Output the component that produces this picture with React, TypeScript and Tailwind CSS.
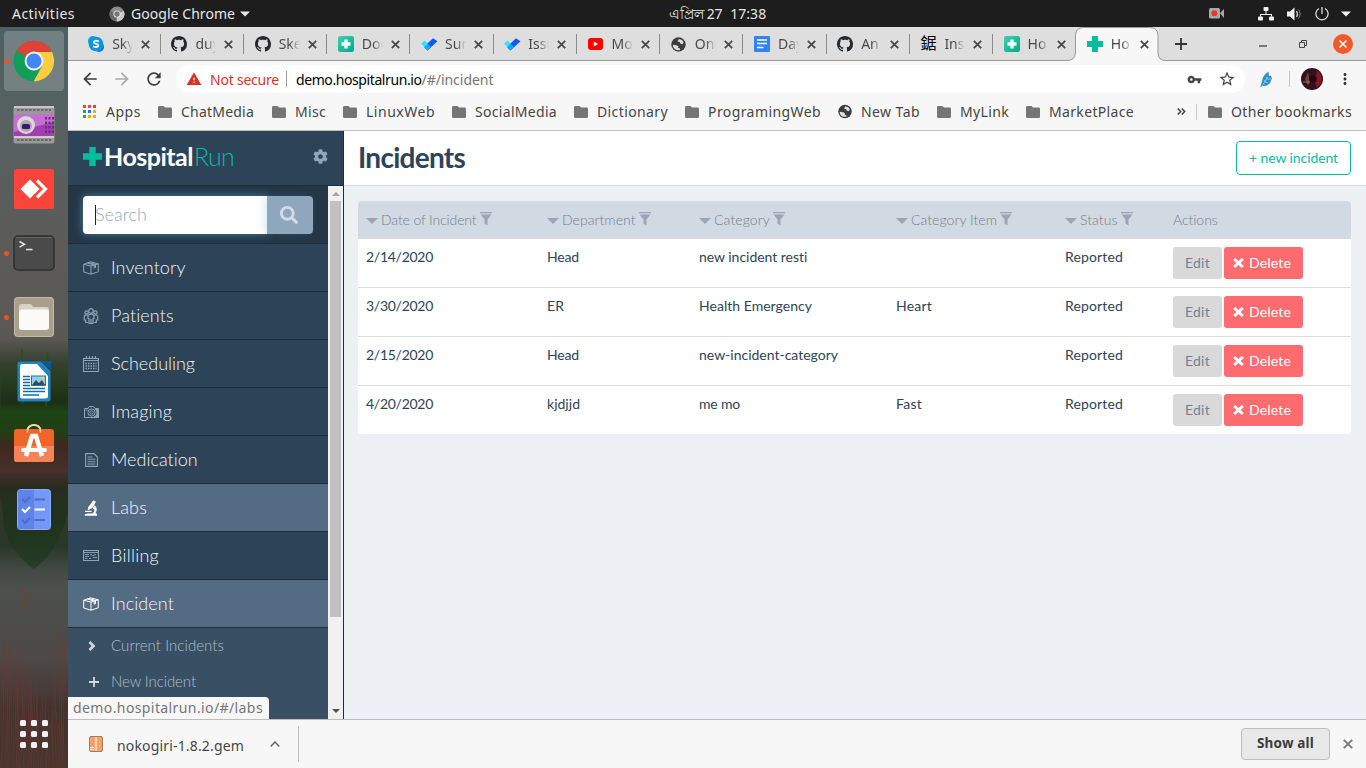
import { useLayoutEffect, useRef } from "react";
import type { ReactNode } from "react";
import { MdArrowBack, MdArrowForward, MdRefresh, MdVpnKey, MdStarBorder, MdMoreVert, MdWarning } from "react-icons/md";
import { FaSearch, FaCog } from "react-icons/fa";

/** Text tracked so that it fills exactly the given width. */
function Fit({ w, className = "", children }: { w: number; className?: string; children: ReactNode }) {
  const ref = useRef<HTMLSpanElement>(null);
  useLayoutEffect(() => {
    const el = ref.current;
    if (!el) return;
    el.style.letterSpacing = "0px";
    const natural = el.getBoundingClientRect().width;
    const n = (el.textContent || "").length;
    el.style.letterSpacing = `${(w - natural) / n}px`;
  }, [w]);
  return (
    <span ref={ref} className={`inline-block shrink-0 whitespace-pre ${className}`}>
      {children}
    </span>
  );
}

/* ---------- desktop ---------- */

function TopBar() {
  return (
    <div className="flex h-[27px] shrink-0 items-center bg-[#1d1d1d] text-[14px] text-[#e6e6e6]">
      <div className="flex w-[669px] items-center pl-3">
        <Fit w={63}>Activities</Fit>
        <svg className="ml-[34px]" width="16" height="16" viewBox="0 0 16 16">
          <circle cx="8" cy="8" r="7.5" fill="#8b8b8b" />
          <path d="M8 8 14.9 5A7.5 7.5 0 0 1 8 15.500z" fill="#c9c9c9" />
          <path d="M1.300 4.500A7.500 7.500 0 0 0 7 15.400L8 8z" fill="#6a6a6a" />
          <circle cx="8" cy="8" r="3.600" fill="#e8e8e8" />
          <circle cx="8" cy="8" r="2.700" fill="#777" />
        </svg>
        <Fit w={104} className="ml-[6px]">Google Chrome</Fit>
        <svg className="ml-[5px]" width="10" height="6" viewBox="0 0 10 6"><path d="M0 .5h10L5 5.500z" fill="#e6e6e6" /></svg>
      </div>
      <div className="flex items-center gap-2">
        <Fit w={52.500}>এপ্রিল 27</Fit>
        <Fit w={36}>17:38</Fit>
      </div>
      <div className="flex flex-1 items-center justify-end pr-[15px]">
        <svg width="16" height="11" viewBox="0 0 16 11">
          <rect x="0" y="0" width="11" height="10.500" rx="1.500" fill="#a9a9a9" />
          <path d="M11 5.200 15 1v9z" fill="#a9a9a9" />
          <circle cx="5.400" cy="5.200" r="3" fill="#e23b2e" />
        </svg>
        <svg className="ml-[33px]" width="16" height="14" viewBox="0 0 16 14" fill="#f0f0f0">
          <rect x="5.500" y="0" width="5" height="4" rx="1" />
          <rect x="0" y="9.500" width="5" height="4" rx="1" />
          <rect x="11" y="9.500" width="5" height="4" rx="1" />
          <path d="M7.500 4h1v3h5.500v2.500h-1V8H3v1.500H2V7h5.500z" />
        </svg>
        <svg className="ml-[13px]" width="16" height="14" viewBox="0 0 16 14" fill="#f0f0f0">
          <path d="M0 4.500h3L7.500.500v13L3 9.500H0z" />
          <path d="M9.500 4q2 3 0 6" fill="none" stroke="#ddd" strokeWidth="1.200" />
          <path d="M11.500 2.500q3.400 4.500 0 9" fill="none" stroke="#888" strokeWidth="1" />
        </svg>
        <svg className="ml-[12px]" width="14" height="14" viewBox="0 0 14 14" fill="none" stroke="#e6e6e6" strokeWidth="1.200">
          <path d="M7 0v7M4 1.400a6.100 6.100 0 1 0 6 0" />
        </svg>
        <svg className="ml-[12px]" width="10" height="6" viewBox="0 0 10 6"><path d="M0 .5h10L5 5.500z" fill="#f0f0f0" /></svg>
      </div>
    </div>
  );
}

function Wallpaper() {
  const reeds = Array.from({ length: 54 }, (_, i) => {
    const x = (i * 29) % 69;
    const top = 590 + ((i * 47) % 110);
    return `M${x} 741Q${x + ((i * 7) % 9) - 4} ${(top + 741) / 2} ${x + ((i * 11) % 7) - 3} ${top}`;
  }).join("");
  const needles = Array.from({ length: 90 }, (_, i) => {
    const x = (i * 23) % 69;
    const y = 318 + ((i * 13) % 36) + Math.abs(x - 32) * 0.35;
    return `M${x} ${y + 22}L${x + (x - 32) * 0.12} ${y}`;
  }).join("");
  return (
    <svg className="absolute inset-0" width="68" height="741" viewBox="0 0 68 741" preserveAspectRatio="none">
      <defs>
        <linearGradient id="wall" x1="0" y1="0" x2="0" y2="1">
          <stop offset="0" stopColor="#4d6164" />
          <stop offset=".12" stopColor="#566160" />
          <stop offset=".3" stopColor="#5c5b59" />
          <stop offset=".42" stopColor="#5b5854" />
          <stop offset=".455" stopColor="#34402e" />
          <stop offset=".48" stopColor="#273b20" />
          <stop offset=".505" stopColor="#1d2f17" />
          <stop offset=".52" stopColor="#1d4413" />
          <stop offset=".545" stopColor="#203f15" />
          <stop offset=".565" stopColor="#40281e" />
          <stop offset=".6" stopColor="#46302a" />
          <stop offset=".622" stopColor="#282a1f" />
          <stop offset=".65" stopColor="#333629" />
          <stop offset=".7" stopColor="#293726" />
          <stop offset=".735" stopColor="#444b45" />
          <stop offset=".76" stopColor="#4d4f4d" />
          <stop offset=".85" stopColor="#4d4a48" />
          <stop offset=".92" stopColor="#44322f" />
          <stop offset="1" stopColor="#41372d" />
        </linearGradient>
        <linearGradient id="reflection" x1="0" y1="0" x2="0" y2="1">
          <stop offset="0" stopColor="#1c3018" stopOpacity="0" />
          <stop offset=".3" stopColor="#1b301a" />
          <stop offset="1" stopColor="#1f3a22" stopOpacity=".9" />
        </linearGradient>
      </defs>
      <rect width="68" height="741" fill="url(#wall)" />
      <path d={needles} stroke="#2c4a22" strokeWidth="1" opacity=".8" />
      <path d="M0 455h68v30Q58 525 34 542Q10 525 4 500z" fill="url(#reflection)" opacity=".8" />
      <path d={reeds} stroke="#6b3a34" strokeWidth=".8" fill="none" opacity=".55" />
      <path d="M20 562l8 5 4 8M25 570l-1 14" stroke="#6e4137" strokeWidth="2" fill="none" opacity=".7" />
    </svg>
  );
}

function Dot({ on }: { on?: boolean }) {
  return <span className={`ml-1 size-[5px] rounded-full ${on ? "bg-[#e95420]" : "bg-transparent"}`} />;
}

function DockRow({ on, active, children }: { on?: boolean; active?: boolean; children: ReactNode }) {
  return (
    <div className={`flex h-[60px] w-[60px] items-center rounded ${active ? "bg-white/20" : ""}`}>
      <span className="-ml-[4px] flex w-[10px]"><Dot on={on} /></span>
      <span className="flex w-[48px] justify-center">{children}</span>
    </div>
  );
}

function Dock() {
  return (
    <div className="relative w-[68px] shrink-0 overflow-hidden">
      <Wallpaper />
      <div className="relative flex h-full flex-col items-center gap-1 pt-1">
        <DockRow on active>
          <svg width="42" height="42" viewBox="0 0 42 42">
            <circle cx="21" cy="21" r="20.300" fill="#129d58" />
            <path d="M21 21 3.400 10.800A20.300 20.300 0 0 1 39 12H21z" fill="#db4437" />
            <path d="M21 12h18A20.300 20.300 0 0 1 20.500 41.300L29 26z" fill="#ffcd40" />
            <path d="M3.400 10.800 12.800 26 21 30l8-4-8.500 15.300A20.300 20.300 0 0 1 3.400 10.800z" fill="#129d58" />
            <circle cx="21" cy="21" r="9.400" fill="#f1f1f1" />
            <circle cx="21" cy="21" r="7.500" fill="#4285f4" />
          </svg>
        </DockRow>
        <DockRow>
          <svg width="42" height="38" viewBox="0 0 42 38">
            <rect x=".5" y=".5" width="41" height="37" rx="2" fill="#9a9a9a" />
            <rect x="1" y="8" width="40" height="22" fill="#a13fae" />
            <path d="M1 8h40v8L1 26z" fill="#c56fd0" />
            <path d="M4 4h34M4 34h34" stroke="#666" strokeWidth="2" strokeDasharray="2.500 1.500" />
            <path d="M1 1h40M1 31h40" stroke="#ddd" strokeWidth="1.500" />
            <path d="M33 11v18M36.500 11v18M40 11v18" stroke="#6e2a80" strokeWidth="2" strokeDasharray="2.500 2" />
            <circle cx="13" cy="19" r="9" fill="#d8d8d8" />
            <circle cx="13" cy="20" r="6" fill="#aaa" />
            <rect x="9" y="18" width="8" height="5" rx="1.500" fill="#3f1478" />
          </svg>
        </DockRow>
        <DockRow>
          <svg width="40" height="40" viewBox="0 0 40 40">
            <rect width="40" height="40" rx="2.500" fill="#fb443a" />
            <path d="M16 10.500 25.500 20 16 29.500 6.500 20z" fill="#fff" />
            <path d="m23 11.500 8.500 8.500-8.500 8.500" fill="none" stroke="#fff" strokeWidth="3.200" />
          </svg>
        </DockRow>
        <DockRow on>
          <svg width="42" height="36" viewBox="0 0 42 36">
            <rect x="1" y="1" width="40" height="34" rx="4" fill="#4a4a4a" stroke="#2e2e2e" strokeWidth="1.500" />
            <path d="M3 2.500h36" stroke="#666" />
            <path d="m6.500 6.500 5 2.800-5 2.800M13 14.500h6.500" fill="none" stroke="#e4e4e4" strokeWidth="1.500" />
          </svg>
        </DockRow>
        <DockRow on>
          <svg width="40" height="40" viewBox="0 0 40 40">
            <rect width="40" height="40" rx="4" fill="#a9a08c" />
            <rect x=".5" y=".5" width="39" height="39" rx="3.500" fill="none" stroke="#c3baa6" />
            <path d="M5 10q0-3 3-3h8q2 0 3 3h14q2 0 2 3v8H5z" fill="#d9d3c5" />
            <rect x="5" y="12.500" width="30" height="20.500" rx="3" fill="#fbfaf8" />
          </svg>
        </DockRow>
        <DockRow>
          <svg width="34" height="41" viewBox="0 0 34 41">
            <path d="M3 .500h21L33.500 10v28a2.500 2.500 0 0 1-2.500 2.500H3A2.500 2.500 0 0 1 .500 38V3A2.500 2.500 0 0 1 3 .500z" fill="#2083c0" />
            <path d="M5.500 3H20l11 12v20q0 2.500-2.500 2.500h-23Q3 37.500 3 35V5.500Q3 3 5.500 3z" fill="#fff" />
            <path d="M24 0h10v9z" fill="#0d5a8c" />
            <path d="M6 15.500h7M6 18.500h7M6 21.500h7M6 24.500h7M6 27.500h22M6 30.500h22M6 34h16" stroke="#0e6ea8" strokeWidth="1.500" />
            <rect x="14.500" y="15" width="14" height="9.500" fill="#8fd0f0" stroke="#1378b4" />
            <path d="m15 24 4-5 3 3 3-3 3 5z" fill="#3d4a4e" />
            <circle cx="26" cy="17" r="1.500" fill="#f7c948" />
          </svg>
        </DockRow>
        <DockRow>
          <svg className="mb-[5px]" width="40" height="38" viewBox="0 0 40 38">
            <path d="M13.500 8V6.500a6.500 5.500 0 0 1 13 0V8" fill="none" stroke="#ecd6ae" strokeWidth="2" />
            <rect y="5" width="40" height="33" rx="3" fill="#ef652a" />
            <path d="M0 22h40v13a3 3 0 0 1-3 3H3a3 3 0 0 1-3-3z" fill="#f5835a" />
            <path d="M13.500 8.500V6.500a6.500 5.500 0 0 1 13 0v2" fill="none" stroke="#ecd6ae" strokeWidth="1.500" />
            <path d="m12 32 6-20h4l6 20" fill="none" stroke="#fff" strokeWidth="4.500" />
            <path d="M9 26h22" stroke="#fff" strokeWidth="4" strokeLinecap="round" />
          </svg>
        </DockRow>
        <DockRow>
          <svg width="34" height="41" viewBox="0 0 34 41">
            <rect x=".500" y=".500" width="33" height="40" rx="3" fill="#7398f8" stroke="#8fabfa" />
            <path d="M3 1h14v39H3A2 2 0 0 1 1 38V3A2 2 0 0 1 3 1z" fill="#5f83ea" />
            <path d="m5 10 3 3 5-5M5 31l3 3 5-5M17.500 10.500H28M17.500 31H28" fill="none" stroke="#4e6cc4" strokeWidth="1.800" />
            <path d="m5 20 3 3 5-5M17.500 20.500H28" fill="none" stroke="#fff" strokeWidth="2.200" />
          </svg>
        </DockRow>
        <div className="mt-auto mb-[20px] grid grid-cols-3 gap-[5px]">
          {Array.from({ length: 9 }, (_, i) => (
            <span key={i} className="size-[6px] rounded-[1.500px] bg-[#f2f2f2]" />
          ))}
        </div>
      </div>
    </div>
  );
}

/* ---------- browser chrome ---------- */

function CloseX() {
  return (
    <svg width="9" height="9" viewBox="0 0 9 9" fill="none" stroke="#454545" strokeWidth="1.700"><path d="m.8.800 7.400 7.400M8.200.800.800 8.200" /></svg>
  );
}

function GithubIcon() {
  return (
    <svg width="16" height="16" viewBox="0 0 16 16" fill="#24292e">
      <path d="M8 0C3.580 0 0 3.580 0 8c0 3.540 2.290 6.530 5.470 7.590.4.070.55-.17.55-.38 0-.19-.01-.82-.01-1.490-2.010.37-2.530-.49-2.690-.94-.09-.23-.48-.94-.82-1.130-.28-.15-.68-.52-.01-.53.63-.01 1.080.58 1.230.82.72 1.210 1.870.87 2.330.66.07-.52.28-.87.51-1.070-1.780-.2-3.640-.89-3.640-3.950 0-.87.31-1.590.82-2.150-.08-.2-.36-1.020.08-2.120 0 0 .67-.21 2.200.82.64-.18 1.320-.27 2-.27.68 0 1.360.09 2 .27 1.530-1.040 2.200-.82 2.200-.82.44 1.100.16 1.920.08 2.120.51.56.82 1.270.82 2.150 0 3.070-1.870 3.750-3.650 3.950.29.25.54.73.54 1.480 0 1.070-.01 1.930-.01 2.200 0 .21.15.46.55.38A8.013 8.013 0 0 0 16 8c0-4.420-3.580-8-8-8z" />
    </svg>
  );
}

function SkypeIcon() {
  return (
    <svg width="16" height="16" viewBox="0 0 16 16">
      <circle cx="5" cy="5" r="5" fill="#00a2e8" /><circle cx="11" cy="11" r="5" fill="#0078d4" /><circle cx="8" cy="8" r="7.300" fill="#0c95e0" />
      <path d="M10.300 5.300Q8 4 6.300 5.200 5 6.800 7.500 7.700L9 8.100q2 1 .8 2.400-1.800 1.200-4.100-.1" fill="none" stroke="#fff" strokeWidth="1.700" strokeLinecap="round" />
    </svg>
  );
}

function GreenPlusIcon() {
  return (
    <svg width="16" height="16" viewBox="0 0 16 16">
      <defs><linearGradient id="gp" x1="0" y1="0" x2="1" y2="1"><stop offset="0" stopColor="#3fd0ae" /><stop offset="1" stopColor="#04a88b" /></linearGradient></defs>
      <rect width="16" height="16" rx="2" fill="url(#gp)" /><path d="M6.300 3.500h3.400v2.800h2.800v3.400H9.700v2.800H6.300V9.700H3.500V6.300h2.800z" fill="#e9fff9" />
    </svg>
  );
}

function BigPlusIcon() {
  return <svg width="16" height="16" viewBox="0 0 16 16"><path d="M5 0h6v5h5v6h-5v5H5v-5H0V5h5z" fill="#03bd9e" /></svg>;
}

function TodoIcon() {
  return (
    <svg width="17" height="13" viewBox="0 0 17 13" className="shrink-0"><path d="M6.500 12.500 2.800 8.800 12 .300l4.500 3z" fill="#0f5cf5" /><path d="m.2 5.800 3.300-3.300L7 6 3.500 9.300z" fill="#35e3f8" /><path d="M3.300 9.200 6.800 5.700 10 9l-3.500 3.500z" fill="#12a8f8" /></svg>
  );
}

function YoutubeIcon() {
  return <svg width="15" height="12" viewBox="0 0 15 12"><rect width="15" height="12" rx="3" fill="#f00" /><path d="M5.800 3.600v4.800L10 6z" fill="#fff" /></svg>;
}

function GlobeIcon() {
  return (
    <svg width="15" height="15" viewBox="0 0 15 15"><circle cx="7.500" cy="7.500" r="7.200" fill="#3c3c3c" /><path d="M7.500 2.200Q11.500 1.800 12.600 5.500L11.500 7.300 9.500 6.800 8.800 5 6.500 4.500zM2 7.800 5.500 8.200 7.500 9.300 7 11 8.800 11.300 9.200 13Q4.200 14 2 9.800z" fill="#dedede" /></svg>
  );
}

function DocsIcon() {
  return <svg width="16" height="16" viewBox="0 0 16 16"><rect width="16" height="16" rx="1" fill="#2f83f3" /><path d="M3 4h10M3 7.500h10M3 11.500h6.500" stroke="#fff" strokeWidth="1.700" /></svg>;
}

const tabs: { icon: ReactNode; title: string }[] = [
  { icon: <SkypeIcon />, title: "Skype" },
  { icon: <GithubIcon />, title: "duyet" },
  { icon: <GithubIcon />, title: "Sket" },
  { icon: <GreenPlusIcon />, title: "Doc" },
  { icon: <TodoIcon />, title: "Sum" },
  { icon: <TodoIcon />, title: "Issu" },
  { icon: <YoutubeIcon />, title: "Mo" },
  { icon: <GlobeIcon />, title: "Onl" },
  { icon: <DocsIcon />, title: "Day" },
  { icon: <GithubIcon />, title: "An" },
  { icon: <span className="font-['Liberation_Serif','Noto_Sans_CJK_SC',serif] text-[16px] leading-4 text-black">鋸</span>, title: "Ins" },
  { icon: <GreenPlusIcon />, title: "Ho" },
  { icon: <BigPlusIcon />, title: "Ho" },
];

function TabStrip() {
  return (
    <div className="flex h-[34px] shrink-0 border-b border-[#999] bg-[#dedede] pl-[9.600px]">
      {tabs.map((t, i) => {
        const active = i === tabs.length - 1;
        return (
          <div key={i} className="relative flex h-[34px] w-[83.230px] shrink-0 items-center pl-[10.600px]">
            {active && (
              <svg className="absolute top-0 -left-[9px]" width="99" height="34" viewBox="0 0 99 34">
                <path d="M0 33.500Q8 33.500 8.500 26V8.500Q8.500.500 16.500.500h66Q91 .5 91 8.500V26Q91 33.500 99 33.500V34H0z" fill="#f7f7f7" />
                <path d="M0 33.500Q8 33.500 8.500 26V8.500Q8.500.500 16.500.500h66Q91 .5 91 8.500V26Q91 33.500 99 33.500" fill="none" stroke="#999" />
              </svg>
            )}
            <span className="relative flex w-4 justify-center">{t.icon}</span>
            <span className="relative ml-2 w-[21px] overflow-hidden whitespace-nowrap bg-linear-to-r from-[#454545] from-50% to-transparent bg-clip-text text-[14px] leading-5 text-transparent">
              {t.title}
            </span>
            <span className="relative ml-[8px]"><CloseX /></span>
            {i < tabs.length - 2 && <span className="ml-auto h-[20px] w-px bg-[#8a8a8a]" />}
          </div>
        );
      })}
      <div className="flex flex-1 items-center pr-[13px] pl-[16px]">
        <svg width="12" height="12" viewBox="0 0 12 12"><path d="M6 0v12M0 6h12" stroke="#333" strokeWidth="1.800" /></svg>
        <svg className="mt-[4px] ml-auto" width="8" height="2" viewBox="0 0 8 2"><path d="M0 1h8" stroke="#333" strokeWidth="1.200" /></svg>
        <svg className="ml-[32px]" width="8" height="8" viewBox="0 0 8 8" fill="none" stroke="#444" strokeWidth="1"><path d="M.5 2.500h5v5h-5zM2.500 2V.500h5v5H6" /></svg>
        <svg className="ml-[26px]" width="20" height="20" viewBox="0 0 20 20"><circle cx="10" cy="10" r="10" fill="#f15928" /><path d="m6.500 6.500 7 7M13.500 6.500l-7 7" stroke="#fff" strokeWidth="1.500" /></svg>
      </div>
    </div>
  );
}

function Toolbar() {
  return (
    <div className="flex h-[36px] shrink-0 items-center bg-[#f7f7f7] pl-[12px] text-[14px]">
      <MdArrowBack size={20} color="#3d3d3d" />
      <MdArrowForward size={20} color="#a9a9a9" className="ml-[12px]" />
      <MdRefresh size={20} color="#3d3d3d" className="ml-[12px]" />
      <div className="ml-[12px] flex h-[28px] w-[1069px] items-center rounded-full bg-white pr-[9px] pl-[10px]">
        <MdWarning size={16} color="#db3228" />
        <Fit w={69} className="ml-2 text-[#db3228]">Not secure</Fit>
        <span className="mx-[7px] h-4 w-px bg-[#9a9a9a]" />
        <Fit w={125.500} className="ml-[2px] text-black">demo.hospitalrun.io</Fit>
        <Fit w={72} className="text-[#757575]">/#/incident</Fit>
        <MdVpnKey size={15} color="#444" className="ml-auto" />
        <MdStarBorder size={18} color="#444" className="ml-[16px]" />
      </div>
      <svg className="ml-[15px]" width="13" height="17" viewBox="0 0 13 17"><path d="M8.500.500Q3 4.500 2.200 9L.3 16.500 2.200 15q5.800.5 8-3.500L12 7.500l-1.200-3L9 5z" fill="#2e8fcd" /><path d="m2 15 6-9M4 9l1 2 3 1M6 6l1.500 2.200L11 8" stroke="#9bd2f2" strokeWidth=".8" fill="none" /></svg>
      <span className="ml-[16px] h-4 w-px bg-[#c4c4c4]" />
      <svg className="ml-[11px]" width="22" height="22" viewBox="0 0 22 22"><circle cx="11" cy="11" r="11" fill="#35101f" /><path d="M16 2.500a10 10 0 0 1 0 17l-2-4.500a5 5 0 0 0 1-7z" fill="#8b1724" /><path d="m7 4-3 7 3 7 2-5-1-4z" fill="#69453a" /><circle cx="11.500" cy="11" r="3.500" fill="#240914" /><path d="M2 14h7" stroke="#8a7a80" /></svg>
      <MdMoreVert size={18} color="#333" className="ml-[13px]" />
    </div>
  );
}

const marks: [string, number, number][] = [
  ["ChatMedia", 73, 18], ["Misc", 31, 17], ["LinuxWeb", 69, 17], ["SocialMedia", 82, 17],
  ["Dictionary", 71, 17], ["ProgramingWeb", 113, 17], ["New Tab", 59, 17], ["MyLink", 49, 17], ["MarketPlace", 85, 0],
];

function Folder() {
  return <svg width="14" height="12" viewBox="0 0 14 12"><path d="M1.300 0h4.200L7 1.600h5.700q1.300 0 1.300 1.300v7.800Q14 12 12.700 12H1.300Q0 12 0 10.700V1.300Q0 0 1.300 0z" fill="#757575" /></svg>;
}

function Bookmarks() {
  const cells = ["#f44", "#f44", "#e5403a", "#2b9c57", "#0f7ef5", "#f6a51f", "#2b9c57", "#f6a51f", "#f6a51f"];
  return (
    <div className="flex h-[34px] shrink-0 items-center border-b border-[#bdbdbd] bg-[#f7f7f7] pb-[4px] pl-[15px] text-[14px] text-[#454545]">
      <div className="grid grid-cols-3 gap-[2px]">
        {cells.map((c, i) => <svg key={i} width="3" height="3"><rect width="3" height="3" fill={c} /></svg>)}
      </div>
      <Fit w={35} className="ml-[10px]">Apps</Fit>
      <div className="ml-[17px] flex">
        {marks.map(([label, w, gap]) => (
          <div key={label} className="flex items-center">
            <span className="mr-[9px] flex w-[14px]">{label === "New Tab" ? <GlobeIcon /> : <Folder />}</span>
            <Fit w={w}>{label}</Fit>
            <svg width={gap} height="1" />
          </div>
        ))}
      </div>
      <svg className="ml-auto" width="9" height="7" viewBox="0 0 9 7" fill="none" stroke="#444" strokeWidth="1.500"><path d="m.7.500 3 3-3 3M4.700.500l3 3-3 3" /></svg>
      <span className="mr-[11px] ml-[10px] h-4 w-px bg-[#c9c9c9]" />
      <Folder />
      <Fit w={121} className="mr-[14px] ml-[9px]">Other bookmarks</Fit>
    </div>
  );
}

/* ---------- HospitalRun ---------- */

function BoxIcon() {
  return <svg width="16" height="14" viewBox="0 0 16 14" fill="none" stroke="currentColor" strokeWidth="1"><path d="M.7 3.300 7.500.800l7.800 2v8L8 13.200.7 11zM.7 3.300 8 5l7.300-2.200M8 5v8.200M4.200 2l7 2v3.200l1.300-.6V3.400L5.800 1.500" /></svg>;
}
function PeopleIcon() {
  return <svg width="16" height="16" viewBox="0 0 16 16" fill="none" stroke="currentColor" strokeWidth="1.200"><circle cx="8" cy="3" r="2.300" /><circle cx="3.600" cy="4.500" r="1.700" /><circle cx="12.400" cy="4.500" r="1.700" /><path d="M5 11V7.500Q8 5 11 7.500V11M6 10v5.500h4V10M8 11v4M4.500 7Q2 6.500 1.200 8.500V12h1.500v2.500H5M11.500 7q2.500-.5 3.300 1.500V12h-1.500v2.500H11" /></svg>;
}
function CalendarIcon() {
  return <svg width="16" height="16" viewBox="0 0 16 16" fill="none" stroke="currentColor"><path d="M.5 2.500h15v13H.500zM.5 4.500h15M3.500 0v3M6.500 0v3M9.500 0v3M12.500 0v3" strokeWidth="1.200" /><path d="M2.500 7.500h11M2.500 10h11M2.500 12.500h11" strokeWidth="1.400" strokeDasharray="1.500 1" /></svg>;
}
function CameraIcon() {
  return <svg width="15" height="12" viewBox="0 0 15 12" fill="none" stroke="currentColor" strokeWidth="1"><path d="M.5 2.500H4L5.200.600h4.600L11 2.500h3.500v9H.500z" /><path d="M11 3h3.500v8H10a4.500 4.500 0 0 0 1-8z" fill="currentColor" /><circle cx="7.500" cy="6.500" r="3.600" /><circle cx="7.500" cy="6.500" r="1.700" /><path d="M1.500 4h2" /></svg>;
}
function DocIcon() {
  return <svg width="13" height="14" viewBox="0 0 13 14" fill="none" stroke="currentColor" strokeWidth="1.100"><path d="M.6.600h8.400l3.400 3.400v9.400H.6zM2.500 4h5M2.500 6.300h8M2.500 8.700h8M2.500 11h8" /></svg>;
}
function MicroscopeIcon() {
  return <svg width="14" height="16" viewBox="0 0 14 16" fill="currentColor"><path d="M9.300.300 12 1.800 8.500 8 7 8.400 4.600 10 3.800 9.500 4 7.200 5.300 5.800z" /><path d="M10.600 5.200Q14.500 8.500 11.500 12.700L13 14v1.700H.8V14.200L4 13.500h4.500Q11 11.500 10.200 9.500L8.800 8.300zM1 10.800h6.500v1.300H1z" /></svg>;
}
function ChequeIcon() {
  return <svg width="16" height="11" viewBox="0 0 16 11" fill="none" stroke="currentColor" strokeWidth="1"><path d="M.5.500h15v10H.500z" strokeWidth="1.200" /><path d="M1 2.500h14M2 4.500h4M7 4.500h2M2 6.500h4M2 8.500h2.500M8.500 6 13 4.500M10 7.500h4M6 8.500h2" strokeWidth=".9" /></svg>;
}

const nav: { label: string; w: number; icon: ReactNode; on?: boolean }[] = [
  { label: "Inventory", w: 74.500, icon: <BoxIcon /> },
  { label: "Patients", w: 63, icon: <PeopleIcon /> },
  { label: "Scheduling", w: 84, icon: <CalendarIcon /> },
  { label: "Imaging", w: 61, icon: <CameraIcon /> },
  { label: "Medication", w: 87, icon: <DocIcon /> },
  { label: "Labs", w: 36, icon: <MicroscopeIcon />, on: true },
  { label: "Billing", w: 48, icon: <ChequeIcon /> },
  { label: "Incident", w: 63, icon: <BoxIcon />, on: true },
];

function Sidebar() {
  return (
    <div className="relative flex w-[276px] shrink-0 flex-col border-r border-[#1f2d3a] bg-[#2d4357] font-['Lato',sans-serif]">
      <div className="flex h-[55px] shrink-0 items-center border-b border-[#1e2d39] pr-[15px] pb-[4px] pl-[15px]">
        <svg width="19" height="19" viewBox="0 0 19 19"><path d="M6.300 0h6.400v6.300H19v6.400h-6.300V19H6.300v-6.300H0V6.300h6.300z" fill="#05bd9e" /></svg>
        <Fit w={89} className="ml-[2px] text-[25px] leading-[50px] font-bold text-white">Hospital</Fit>
        <Fit w={40} className="ml-px text-[25px] leading-[50px] font-light text-[#05bd9e]">Run</Fit>
        <FaCog size={15} color="#8fa6bc" className="ml-auto" />
      </div>
      <div className="flex min-h-0 flex-1">
        <div className="flex w-[260px] flex-col overflow-hidden">
          <div className="flex h-[58px] shrink-0 border-b border-[#1e2d39] bg-[#253747] px-[15px] pt-[10px]">
            <div className="flex h-[38px] w-[184px] items-center rounded-l bg-white pl-[12px] shadow-[0_0_9px_rgba(80,165,215,0.65)]">
              <span className="h-[20px] w-px bg-[#222]" />
              <Fit w={52} className="-ml-px pb-[2px] text-[18px] font-light text-[#94aac0]">Search</Fit>
            </div>
            <div className="relative flex h-[38px] w-[46px] items-center justify-center rounded-r bg-[#8fa7bd] shadow-[-3px_0_8px_-1px_rgba(80,165,215,0.25)]">
              <FaSearch size={18} color="#d3dce5" className="mr-[2px]" />
            </div>
          </div>
          {nav.map((n) => (
            <div key={n.label} className={`flex h-[48px] shrink-0 items-center border-b border-[#1e2d39] pl-[15px] ${n.on ? "bg-[#546b84] text-white" : "text-[#8da5ba]"}`}>
              <span className="flex w-4 justify-center">{n.icon}</span>
              <Fit w={n.w} className="ml-[12px] text-[18px] font-light text-[#f2f5f8]">{n.label}</Fit>
            </div>
          ))}
          <div className="flex-1 bg-[#394f64] text-[15px] font-light text-[#adbfd0]">
            <div className="flex h-[36px] items-center pl-[20px]">
              <svg width="8" height="10" viewBox="0 0 8 10"><path d="m1.500 1 4 4-4 4" fill="none" stroke="#d1dae3" strokeWidth="2.600" /></svg>
              <Fit w={113} className="ml-[15px] pb-[2px]">Current Incidents</Fit>
            </div>
            <div className="flex h-[36px] items-center pl-[21px]">
              <svg width="10" height="10" viewBox="0 0 10 10"><path d="M5 0v10M0 5h10" stroke="#d1dae3" strokeWidth="1.800" /></svg>
              <Fit w={85} className="ml-[12px] pb-[2px]">New Incident</Fit>
            </div>
          </div>
        </div>
        <div className="flex w-[15px] flex-col items-center bg-[#f1f1f1]">
          <svg className="mt-[6px]" width="8" height="4" viewBox="0 0 8 4"><path d="M0 4h8L4 0z" fill="#a3a3a3" /></svg>
          <span className="mt-[5px] h-[416px] w-[11px] bg-[#c1c1c1]" />
          <svg className="mt-auto mb-[6px]" width="8" height="4" viewBox="0 0 8 4"><path d="M0 0h8L4 4z" fill="#505050" /></svg>
        </div>
      </div>
      <div className="absolute bottom-0 left-0 flex h-[22px] w-[201px] items-center rounded-tr bg-[#f7f7f7] pl-[5px] font-['Noto_Sans',sans-serif]">
        <Fit w={190} className="pb-[2px] text-[14px] text-[#757575]">demo.hospitalrun.io/#/labs</Fit>
      </div>
    </div>
  );
}

function SortCaret() {
  return <svg className="mt-px" width="12" height="6" viewBox="0 0 12 6"><path d="M0 0h12L6 6z" fill="#9aa6b3" /></svg>;
}
function Funnel() {
  return <svg className="mb-[3px]" width="12" height="14" viewBox="0 0 12 14"><path d="M0 0h12v1.300H0zM.5 2.500h11L7.500 7.500V13.500L4.500 11.500v-4z" fill="#9aa6b3" /></svg>;
}

const grid = "grid grid-cols-[181px_152px_197px_169px_108px_186px]";
const heads: [string, number][] = [["Date of Incident", 95.500], ["Department", 73.500], ["Category", 56], ["Category Item", 86], ["Status", 37.500]];
const rows: [string, number][][] = [
  [["2/14/2020", 67], ["Head", 32], ["new incident resti", 108.500], ["", 0]],
  [["3/30/2020", 67], ["ER", 17], ["Health Emergency", 113], ["Heart", 36]],
  [["2/15/2020", 67], ["Head", 32], ["new-incident-category", 139], ["", 0]],
  [["4/20/2020", 67], ["kjdjjd", 33], ["me mo", 41], ["Fast", 26]],
];

function Main() {
  return (
    <div className="flex flex-1 flex-col bg-[#edf1f5] font-['Lato',sans-serif] text-[14px] text-[#2d4357]">
      <div className="flex h-[55px] shrink-0 items-center justify-between border-b border-[#d1d9e3] bg-white pr-[15px] pl-[14px]">
        <Fit w={107} className="pb-[2px] text-[28px] font-bold">Incidents</Fit>
        <button className="flex h-[34px] w-[115px] items-center justify-center rounded border border-[#05bd9e] text-[#05bd9e]">
          <Fit w={89} className="pb-[2px]">+ new incident</Fit>
        </button>
      </div>
      <div className="mt-[15px] mr-[15px] ml-[14px] overflow-hidden rounded bg-white">
        <div className={`${grid} h-[38px] border-y border-[#d8dce1] bg-[#d1d9e3] font-light text-[#73818f]`}>
          {heads.map(([h, w]) => (
            <div key={h} className="flex items-center pl-2">
              <SortCaret />
              <Fit w={w} className="mr-[3px] ml-[3px] pb-[2px]">{h}</Fit>
              <Funnel />
            </div>
          ))}
          <div className="flex items-center pl-2"><Fit w={45} className="pb-[2px]">Actions</Fit></div>
        </div>
        {rows.map((r, i) => (
          <div key={i} className={`${grid} ${i < 3 ? "h-[49px] border-b border-[#ddd]" : "h-[48px]"}`}>
            {r.map(([t, w], j) => (
              <div key={j} className="pt-[8px] pl-2 leading-5">{t && <Fit w={w}>{t}</Fit>}</div>
            ))}
            <div className="pt-[8px] pl-2 leading-5"><Fit w={58}>Reported</Fit></div>
            <div className="flex gap-[2px] pt-2 pl-2">
              <button className="flex h-8 w-[49px] items-center justify-center rounded-[3px] bg-[#d9d9d9] text-[#73818f]"><Fit w={25} className="pb-[2px]">Edit</Fit></button>
              <button className="flex h-8 w-[79px] items-center rounded-[3px] bg-[#ff6c70] pl-[9px] text-white">
                <svg width="11" height="10" viewBox="0 0 11 10"><path d="m1.200 1 8.600 8M9.800 1 1.200 9" stroke="#fff" strokeWidth="3" /></svg>
                <Fit w={42} className="ml-[5px] pb-[2px]">Delete</Fit>
              </button>
            </div>
          </div>
        ))}
      </div>
    </div>
  );
}

function Downloads() {
  return (
    <div className="flex h-[49px] shrink-0 items-center border-t border-[#bdbdbd] bg-[#f7f7f7] pl-[21px] text-[14px] text-[#454545]">
      <svg width="14" height="16" viewBox="0 0 14 16"><rect x=".5" y=".5" width="13" height="15" rx="1.500" fill="#f1a26c" stroke="#a8795a" /><path d="M7 1v14" stroke="#f8d3b0" strokeWidth="2" /><path d="M1 11.500h4M1 13.500h4" stroke="#fff" /></svg>
      <Fit w={127} className="mt-[3px] ml-[14px]">nokogiri-1.8.2.gem</Fit>
      <svg className="ml-[26px]" width="10" height="6" viewBox="0 0 10 6" fill="none" stroke="#666" strokeWidth="1.500"><path d="m.7 5.500 4.300-4.500 4.300 4.500" /></svg>
      <span className="ml-[18px] h-9 w-px bg-[#bdbdbd]" />
      <button className="ml-auto flex h-[32px] w-[89px] items-center justify-center rounded border border-[#bdbdbd] bg-[#e8e8e8] pb-[2px] font-bold text-[#3c3c3c]">
        <Fit w={57} className="text-[13.500px]">Show all</Fit>
      </button>
      <svg className="mr-[13px] ml-[13px]" width="10" height="10" viewBox="0 0 10 10"><path d="m.8.800 8.400 8.400M9.200.800.800 9.200" stroke="#777" strokeWidth="1.800" /></svg>
    </div>
  );
}

export default function App() {
  return (
    <div className="flex h-[768px] w-[1366px] flex-col overflow-hidden bg-[#f7f7f7] font-['Noto_Sans','Open_Sans',sans-serif]">
      <TopBar />
      <div className="flex min-h-0 flex-1">
        <Dock />
        <div className="flex min-w-0 flex-1 flex-col">
          <TabStrip />
          <Toolbar />
          <Bookmarks />
          <div className="flex min-h-0 flex-1">
            <Sidebar />
            <Main />
          </div>
          <Downloads />
        </div>
      </div>
    </div>
  );
}
